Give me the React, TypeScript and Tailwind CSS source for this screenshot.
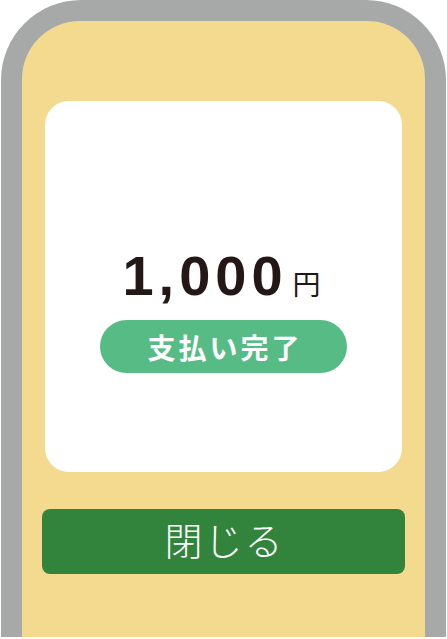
import { type FC } from 'react'

const jp = { fontFamily: '"Noto Sans CJK JP", "Noto Sans", sans-serif' }

const App: FC = () => {
  return (
    <div className="w-[447px] h-[639px] bg-white overflow-hidden">
      {/* Phone frame — gray bezel, open at the bottom */}
      <div className="ml-[1px] w-[445px] h-[637px] bg-[#a7a9a8] rounded-t-[80px] pt-[21px] px-[21px]">
        <div className="h-full bg-[#f4da8f] rounded-t-[58px] pt-[80px] flex flex-col">
          {/* Receipt card */}
          <div className="mx-[23px] h-[371px] bg-white rounded-[24px] flex flex-col items-center pt-[147px]">
            <div className="flex items-baseline h-[56px] leading-[56px] text-[#231815] pr-[4px]">
              <span
                className="text-[56px] font-bold tracking-[5px]"
                style={{ fontFamily: '"Liberation Sans", Arial, sans-serif' }}
              >
                1,000
              </span>
              <span className="ml-[5px] text-[28px] leading-none" style={jp}>
                円
              </span>
            </div>

            <div className="mt-[16px] w-[247px] h-[53px] rounded-full bg-[#56bb85] flex items-center justify-center">
              <span
                className="text-white text-[28px] font-bold tracking-[3px] leading-none pl-[3px]"
                style={jp}
              >
                支払い完了
              </span>
            </div>
          </div>

          {/* Close button */}
          <button className="mx-[20px] mt-[37px] h-[65px] rounded-[8px] bg-[#32833b] flex items-center justify-center pb-[6px]">
            <span className="text-white text-[38px] font-light tracking-[2px] leading-none pl-[2px]" style={jp}>
              閉じる
            </span>
          </button>
        </div>
      </div>
    </div>
  )
}

export default App
